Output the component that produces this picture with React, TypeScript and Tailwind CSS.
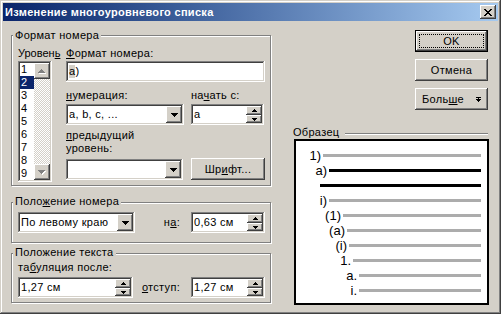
import React from "react";

const raised =
  "shadow-[inset_-1px_-1px_0_#404040,inset_1px_1px_0_#fff,inset_-2px_-2px_0_#808080,inset_2px_2px_0_#d4d0c8]";
const sunken =
  "shadow-[inset_-1px_-1px_0_#fff,inset_1px_1px_0_#808080,inset_-2px_-2px_0_#d4d0c8,inset_2px_2px_0_#404040]";
const etched =
  "border border-[#808080] shadow-[1px_1px_0_#fff,inset_1px_1px_0_#fff]";

function Px({
  rows,
  color,
  emboss,
}: {
  rows: string[];
  color: string;
  emboss?: boolean;
}) {
  const w = rows[0].length + (emboss ? 1 : 0);
  const h = rows.length + (emboss ? 1 : 0);
  const rects: React.ReactNode[] = [];
  if (emboss) {
    rows.forEach((r, y) => {
      for (let x = 0; x < r.length; x++)
        if (r[x] === "x")
          rects.push(
            <rect key={`e${x}-${y}`} x={x + 1} y={y + 1} width={1} height={1} fill="#fff" />
          );
    });
  }
  rows.forEach((r, y) => {
    for (let x = 0; x < r.length; x++)
      if (r[x] === "x")
        rects.push(
          <rect key={`${x}-${y}`} x={x} y={y} width={1} height={1} fill={color} />
        );
  });
  return (
    <svg width={w} height={h} viewBox={`0 0 ${w} ${h}`} shapeRendering="crispEdges">
      {rects}
    </svg>
  );
}

const DOWN7 = ["xxxxxxx", ".xxxxx.", "..xxx..", "...x..."];
const UP7 = ["...x...", "..xxx..", ".xxxxx.", "xxxxxxx"];
const DOWN5 = ["xxxxx", ".xxx.", "..x.."];
const UP5 = ["..x..", ".xxx.", "xxxxx"];
const CLOSE = [
  "xx....xx",
  ".xx..xx.",
  "..xxxx..",
  "...xx...",
  "..xxxx..",
  ".xx..xx.",
  "xx....xx",
];
const MORE = ["xxxxx", "..x..", "xxxxx", ".xxx.", "..x.."];

function Drop() {
  return (
    <div className={`w-[16px] h-full bg-[#d4d0c8] ${raised} flex items-center justify-center`}>
      <Px rows={DOWN7} color="#000" />
    </div>
  );
}

function Spin() {
  return (
    <div className="w-[16px] h-full flex flex-col">
      <div className={`h-[9px] bg-[#d4d0c8] ${raised} flex items-center justify-center`}>
        <Px rows={UP5} color="#000" />
      </div>
      <div className={`h-[8px] bg-[#d4d0c8] ${raised} flex items-center justify-center`}>
        <Px rows={DOWN5} color="#000" />
      </div>
    </div>
  );
}

function Field({
  className,
  children,
  right,
}: {
  className?: string;
  children?: React.ReactNode;
  right?: React.ReactNode;
}) {
  return (
    <div className={`h-[21px] bg-white ${sunken} p-[2px] flex ${className ?? ""}`}>
      <div className="flex-1 flex items-center pl-[1px] overflow-hidden whitespace-nowrap">
        {children}
      </div>
      {right}
    </div>
  );
}

function Btn({ className, children }: { className?: string; children: React.ReactNode }) {
  return (
    <div
      className={`h-[22px] bg-[#d4d0c8] ${raised} flex items-center justify-center whitespace-nowrap ${className ?? ""}`}
    >
      {children}
    </div>
  );
}

function Legend({ className, children }: { className?: string; children: React.ReactNode }) {
  return (
    <div
      className={`ml-[1px] self-start bg-[#d4d0c8] pl-[2px] pr-[2px] h-[13px] whitespace-nowrap ${className ?? ""}`}
    >
      {children}
    </div>
  );
}

const levels = ["1", "2", "3", "4", "5", "6", "7", "8", "9"];

function LevelList() {
  return (
    <div className={`mt-[1px] h-[121px] w-[34px] bg-white ${sunken} p-[2px] flex`}>
      <div className="w-[14px] flex flex-col">
        {levels.map((n) => (
          <div
            key={n}
            className={
              n === "2"
                ? "h-[13px] pl-[1px] bg-[#0a246a] text-white"
                : "h-[13px] pl-[1px]"
            }
          >
            {n}
          </div>
        ))}
      </div>
      <div className="w-[16px] flex flex-col">
        <div className={`h-[16px] bg-[#d4d0c8] ${raised} flex items-center justify-center`}>
          <Px rows={UP7} color="#808080" emboss />
        </div>
        <div className="flex-1 bg-[image:repeating-conic-gradient(#fff_0_25%,#d4d0c8_0_50%)] bg-size-[2px_2px]" />
        <div className={`h-[16px] bg-[#d4d0c8] ${raised} flex items-center justify-center`}>
          <Px rows={DOWN7} color="#808080" emboss />
        </div>
      </div>
    </div>
  );
}

const previewRows: { t: string; s: number; black?: boolean }[] = [
  { t: "1)", s: 323 },
  { t: "a)", s: 329, black: true },
  { t: "", s: 320, black: true },
  { t: "i)", s: 329 },
  { t: "(1)", s: 343 },
  { t: "(a)", s: 347 },
  { t: "(i)", s: 349 },
  { t: "1.", s: 353 },
  { t: "a.", s: 359 },
  { t: "i.", s: 359 },
];

function Preview() {
  return (
    <div className="ml-[1px] h-[166px] border-2 border-black bg-white pt-[7px] pr-[6px] flex flex-col text-[13px] tracking-normal">
      {previewRows.map((r, i) => (
        <div key={i} className="h-[15px] flex items-center">
          <div
            className="text-right pr-[2px] whitespace-nowrap leading-[15px]"
            style={{ width: r.s - 296 }}
          >
            {r.t}
          </div>
          <div className={r.black ? "flex-1 h-[3px] bg-black" : "flex-1 h-[3px] bg-[#acacac]"} />
        </div>
      ))}
    </div>
  );
}

export default function App() {
  return (
    <div className="w-[501px] h-[314px] bg-[#d4d0c8] p-[3px] flex flex-col font-['Liberation_Sans',Arial,sans-serif] text-[11px] leading-[13px] tracking-[0.3px] text-black shadow-[inset_-1px_-1px_0_#404040,inset_1px_1px_0_#d4d0c8,inset_-2px_-2px_0_#808080,inset_2px_2px_0_#fff] overflow-hidden">
      {/* Title bar */}
      <div className="h-[18px] flex items-center bg-linear-to-r from-[#0a246a] to-[#a6caf0] pl-[2px] pr-[2px]">
        <span className="text-white font-bold whitespace-nowrap tracking-[0.3px]">
          Изменение многоуровневого списка
        </span>
        <div className={`ml-auto w-[16px] h-[14px] bg-[#d4d0c8] ${raised} flex items-center justify-center`}>
          <Px rows={CLOSE} color="#000" />
        </div>
      </div>

      {/* Content */}
      <div className="flex pl-[8px]">
        {/* Left column */}
        <div className="w-[260px] mt-[14px] flex flex-col">
          {/* Формат номера */}
          <div className={`h-[151px] ${etched} flex flex-col`}>
            <Legend className="mt-[-7px]">Формат номера</Legend>
            <div className="mt-[5px] pl-[6px] flex">
              <div className="w-[34px] flex flex-col">
                <div className="h-[13px] whitespace-nowrap tracking-normal">
                  Уровен<span className="underline">ь</span>
                </div>
                <LevelList />
              </div>
              <div className="ml-[14px] w-[200px] flex flex-col">
                <div className="h-[13px] whitespace-nowrap">
                  <span className="underline">Ф</span>ормат номера:
                </div>
                <Field className="mt-[1px] w-[199px]">
                  <span className="bg-[#d4d0c8]">a</span>)
                </Field>
                <div className="mt-[7px] flex h-[13px] whitespace-nowrap">
                  <div className="w-[125px]">
                    <span className="underline">н</span>умерация:
                  </div>
                  <div>
                    на<span className="underline">ч</span>ать с:
                  </div>
                </div>
                <div className="mt-[2px] flex">
                  <Field className="w-[118px]" right={<Drop />}>
                    a, b, c, ...
                  </Field>
                  <Field className="ml-[7px] w-[73px]" right={<Spin />}>
                    a
                  </Field>
                </div>
                <div className="mt-[4px] whitespace-nowrap">
                  <span className="underline">п</span>редыдущий
                  <br />
                  уровень:
                </div>
                <div className="mt-[3px] flex items-end">
                  <Field className="w-[117px]" right={<Drop />} />
                  <Btn className="ml-[8px] w-[74px]">
                    Шр<span className="underline">и</span>фт...
                  </Btn>
                </div>
              </div>
            </div>
          </div>

          {/* Положение номера */}
          <div className={`mt-[16px] h-[41px] ${etched} flex flex-col`}>
            <Legend className="mt-[-8px]">
              Поло<span className="underline">ж</span>ение номера
            </Legend>
            <div className="mt-[4px] pl-[6px] pr-[5px] flex items-center">
              <Field className="w-[117px]" right={<Drop />}>
                По левому краю
              </Field>
              <div className="flex-1 text-right pr-[11px] whitespace-nowrap">
                н<span className="underline">а</span>:
              </div>
              <Field className="w-[74px]" right={<Spin />}>
                0,63 см
              </Field>
            </div>
          </div>

          {/* Положение текста */}
          <div className={`mt-[10px] h-[50px] ${etched} flex flex-col`}>
            <Legend className="mt-[-8px]">Положение текста</Legend>
            <div className="mt-[2px] pl-[6px] h-[13px] whitespace-nowrap">
              та<span className="underline">б</span>уляция после:
            </div>
            <div className="mt-[3px] pl-[6px] pr-[5px] flex items-center">
              <Field className="w-[115px]" right={<Spin />}>
                1,27 см
              </Field>
              <div className="flex-1 text-right pr-[11px] whitespace-nowrap">
                <span className="underline">о</span>тступ:
              </div>
              <Field className="w-[74px]" right={<Spin />}>
                1,27 см
              </Field>
            </div>
          </div>
        </div>

        {/* Right column */}
        <div className="ml-[22px] w-[196px] pt-[9px] flex flex-col">
          <div className="self-end mr-[1px] w-[73px] h-[22px] border border-black">
            <div className={`h-full bg-[#d4d0c8] ${raised} p-[3px]`}>
              <div className="h-full border border-dotted border-black flex items-center justify-center">
                OK
              </div>
            </div>
          </div>
          <Btn className="mt-[7px] self-end mr-[1px] w-[73px]">Отмена</Btn>
          <Btn className="mt-[7px] self-end mr-[1px] w-[73px]">
            <span>
              Боль<span className="underline">ш</span>е
            </span>
            <span className="ml-[12px] flex">
              <Px rows={MORE} color="#000" />
            </span>
          </Btn>
          <div className="mt-[16px] flex h-[13px]">
            <span className="whitespace-nowrap">Образец</span>
            <div className="ml-[6px] mr-[1px] mt-[7px] flex-1 h-[2px] border-t border-b border-t-[#808080] border-b-white" />
          </div>
          <Preview />
        </div>
      </div>
    </div>
  );
}
